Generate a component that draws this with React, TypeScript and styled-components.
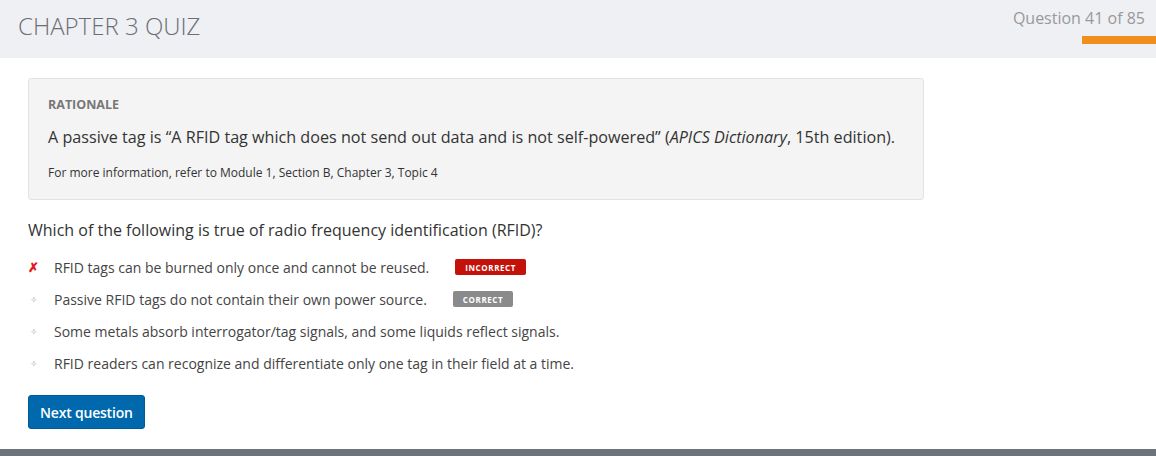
import React from 'react';
import styled, { createGlobalStyle } from 'styled-components';

const GlobalStyle = createGlobalStyle`
  html, body {
    margin: 0;
    padding: 0;
    background: #ffffff;
    font-family: "Open Sans", "Liberation Sans", sans-serif;
    color: #333;
  }
  * { box-sizing: border-box; }
`;

const Page = styled.div`
  width: 1156px;
  height: 456px;
  display: flex;
  flex-direction: column;
  overflow: hidden;
`;

const Header = styled.header`
  height: 58px;
  background: #eff0f4;
  display: flex;
  justify-content: space-between;
  align-items: flex-start;
`;

const Title = styled.h1`
  margin: 9px 0 0 18px;
  font-size: 24px;
  font-weight: 300;
  color: #6a6e75;
`;

const Progress = styled.div`
  display: flex;
  flex-direction: column;
  align-items: flex-end;
`;

const Counter = styled.div`
  margin: 7px 11px 0 0;
  font-size: 16px;
  color: #999;
`;

const ProgressBar = styled.div`
  margin-top: 7px;
  width: 74px;
  height: 8px;
  background: #f18e1c;
`;

const Content = styled.main`
  flex: 1;
  padding: 20px 0 0 28px;
`;

const Rationale = styled.section`
  width: 896px;
  background: #f4f4f4;
  border: 1px solid #e2e2e2;
  border-radius: 3px;
  padding: 17px 19px 17px 19px;
`;

const Label = styled.div`
  font-size: 12.5px;
  font-weight: 700;
  color: #777;
  line-height: 18px;
`;

const RationaleText = styled.p`
  margin: 11px 0 0;
  font-size: 16.15px;
  line-height: 24px;
  color: #333;
`;

const SmallText = styled.p`
  margin: 15px 0 0;
  font-size: 12px;
  line-height: 18px;
  color: #333;
`;

const Question = styled.p`
  margin: 18px 0 0;
  font-size: 16px;
  line-height: 24px;
  color: #333;
`;

const Options = styled.ul`
  list-style: none;
  margin: 9px 0 0;
  padding: 0;
`;

const Option = styled.li`
  display: flex;
  align-items: center;
  height: 32px;
  font-size: 14px;
  color: #444;
`;

const Marker = styled.span<{ $wrong?: boolean }>`
  width: 26px;
  display: inline-flex;
  justify-content: flex-start;
  padding-left: ${p => (p.$wrong ? '0' : '2px')};
  color: ${p => (p.$wrong ? '#e8141c' : '#aaa')};
  font-size: ${p => (p.$wrong ? '13px' : '9px')};
  font-weight: ${p => (p.$wrong ? 700 : 400)};
`;

const Badge = styled.span<{ $tone: 'red' | 'gray' }>`
  margin-left: 26px;
  height: 16px;
  padding: 0 10px;
  border-radius: 2px;
  display: inline-flex;
  align-items: center;
  font-size: 8px;
  font-weight: 700;
  letter-spacing: 0.6px;
  color: #fff;
  background: ${p => (p.$tone === 'red' ? '#c4120a' : '#8a8a8a')};
`;

const NextButton = styled.button`
  margin-top: 16px;
  height: 34px;
  padding: 0 11px;
  background: #0068ad;
  border: 1px solid #005a96;
  border-radius: 3px;
  color: #fff;
  font-family: inherit;
  font-size: 14px;
  font-weight: 600;
  letter-spacing: -0.2px;
  cursor: pointer;
`;

const Footer = styled.footer`
  height: 7px;
  background: #6b747c;
`;

const options = [
  { text: 'RFID tags can be burned only once and cannot be reused.', wrong: true, badge: 'INCORRECT' as const },
  { text: 'Passive RFID tags do not contain their own power source.', badge: 'CORRECT' as const },
  { text: 'Some metals absorb interrogator/tag signals, and some liquids reflect signals.' },
  { text: 'RFID readers can recognize and differentiate only one tag in their field at a time.' },
];

export default function App() {
  return (
    <>
      <GlobalStyle />
      <Page>
        <Header>
          <Title>CHAPTER 3 QUIZ</Title>
          <Progress>
            <Counter>Question 41 of 85</Counter>
            <ProgressBar />
          </Progress>
        </Header>
        <Content>
          <Rationale>
            <Label>RATIONALE</Label>
            <RationaleText>
              A passive tag is “A RFID tag which does not send out data and is not self-powered” (<em>APICS Dictionary</em>, 15th edition).
            </RationaleText>
            <SmallText>For more information, refer to Module 1, Section B, Chapter 3, Topic 4</SmallText>
          </Rationale>
          <Question>Which of the following is true of radio frequency identification (RFID)?</Question>
          <Options>
            {options.map(o => (
              <Option key={o.text}>
                <Marker $wrong={o.wrong}>{o.wrong ? '✗' : '✧'}</Marker>
                {o.text}
                {o.badge && <Badge $tone={o.badge === 'INCORRECT' ? 'red' : 'gray'}>{o.badge}</Badge>}
              </Option>
            ))}
          </Options>
          <NextButton>Next question</NextButton>
        </Content>
        <Footer />
      </Page>
    </>
  );
}
